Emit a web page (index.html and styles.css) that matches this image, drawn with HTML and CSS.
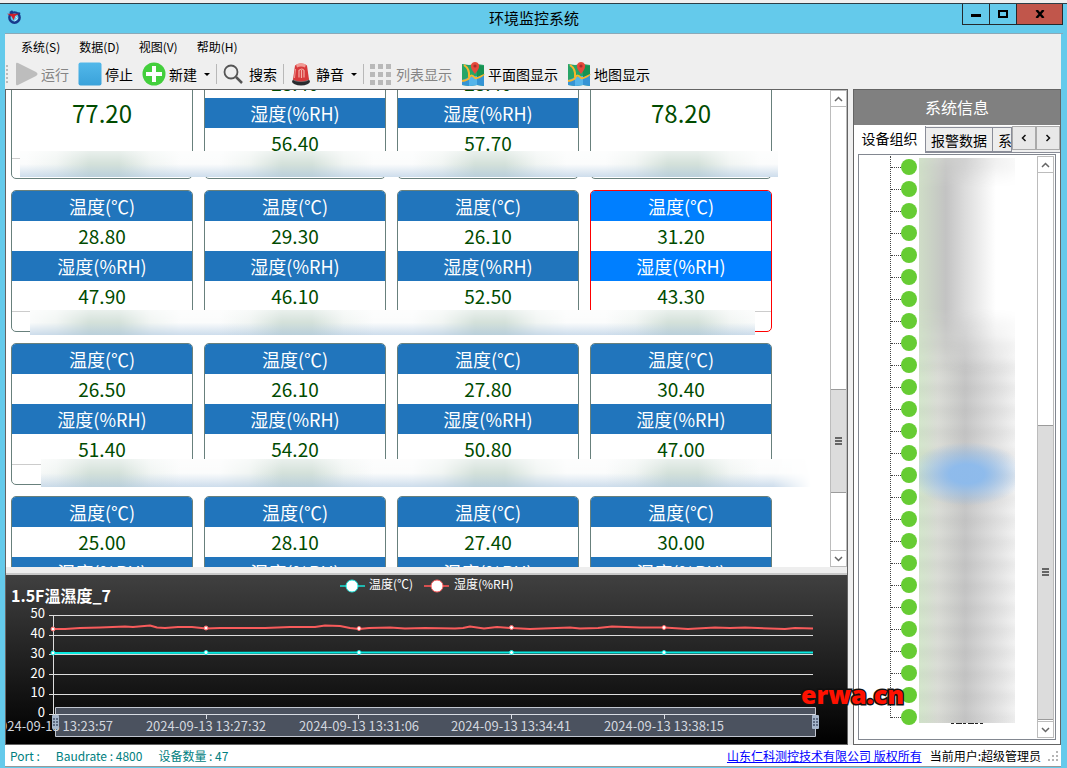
FILE: index.html
```html
<!DOCTYPE html>
<html lang="zh-CN">
<head>
<meta charset="utf-8">
<title>环境监控系统</title>
<link rel="stylesheet" href="styles.css">
</head>
<body>
<div class="window">
  <header class="titlebar">
    <svg class="app-icon" viewBox="0 0 16 16" aria-hidden="true"><circle cx="8" cy="8" r="5.5" fill="none" stroke="#173a8c" stroke-width="2.6"/><path d="M3 3l3-2M12 3l2 1" stroke="#173a8c" stroke-width="2"/><path d="M0 4h13l-4 2-2 5-2-4z" fill="#d11f2a"/><path d="M9 7l2 2-3 3" fill="none" stroke="#e8eefb" stroke-width="1"/></svg>
    <h1 class="window-title">环境监控系统</h1>
    <div class="window-controls">
      <button class="control" aria-label="最小化"><svg viewBox="0 0 10 8" width="10" height="8"><path d="M0 4h10v3H0z"/></svg></button>
      <button class="control" aria-label="最大化"><svg viewBox="0 0 10 8" width="10" height="8"><path d="M1 1h8v6H1z" fill="none" stroke="#000" stroke-width="2"/></svg></button>
      <button class="control control-close" aria-label="关闭"><svg viewBox="0 0 10 8" width="10" height="8"><path d="M1.500 0l7 8M8.500 0l-7 8" stroke="#000" stroke-width="2.4"/></svg></button>
    </div>
  </header>
  <nav class="menu">
    <button>系统(S)</button><button>数据(D)</button><button>视图(V)</button><button>帮助(H)</button>
  </nav>
  <div class="toolbar">
    <span class="grip"></span>
    <button disabled><svg viewBox="0 0 24 24"><path d="M2 2q0-2 2-1l18 9q3 2 0 4L4 23q-2 1-2-1z" fill="#bdbdbd"/></svg>运行</button>
    <button><svg viewBox="0 0 24 24"><defs><linearGradient id="stop" x2="0" y2="1"><stop stop-color="#52b8ea"/><stop offset="1" stop-color="#3aa2da"/></linearGradient></defs><rect x=".5" y=".5" width="23" height="23" rx="2" fill="url(#stop)"/></svg>停止</button>
    <button><svg viewBox="0 0 24 24"><circle cx="12" cy="12" r="11.5" fill="#43cf3c"/><path d="M10 4h4v6h6v4h-6v6h-4v-6H4v-4h6z" fill="#fff"/></svg>新建<i class="caret"></i></button>
    <span class="separator"></span>
    <button><svg viewBox="0 0 24 24"><circle cx="9" cy="10" r="6.500" fill="none" stroke="#555" stroke-width="1.800"/><path d="M14 15l6 6" stroke="#555" stroke-width="2.500"/></svg>搜索</button>
    <span class="separator"></span>
    <button><svg viewBox="0 0 24 24"><ellipse cx="12" cy="19.500" rx="9" ry="4" fill="#292b2e"/><ellipse cx="12" cy="17.500" rx="8" ry="2.500" fill="#777"/><path d="M6 3.500q6-4 12 0l2 14q-8 4-16 0z" fill="#d7393b"/><path d="M7 2.500q5-3 10 0l-1 3q-4-2-8 0z" fill="#f19a94"/><path d="M10 15.500v-7q3-3 5 0v7M12.500 8v8" fill="none" stroke="#f4b0a8" stroke-width="1.200"/><path d="M6.500 7l-1 9" stroke="#f19a94"/></svg>静音<i class="caret"></i></button>
    <span class="separator"></span>
    <button disabled><svg viewBox="0 0 24 24"><path d="M1 2h5v5H1zM9 2h5v5H9zM17 2h5v5h-5zM1 10h5v5H1zM9 10h5v5H9zM17 10h5v5h-5zM1 18h5v5H1zM9 18h5v5H9zM17 18h5v5h-5z" fill="#b9b9b9"/></svg>列表显示</button>
    <button><svg viewBox="0 0 24 24"><g id="map"><path d="M1 2l7 1 8-1 7 1v21l-7-1-8 1-7-1z" fill="#27a567"/><path d="M1 18l7-3 15-2v11l-7-1-8 1-7-1z" fill="#3594d5"/><path d="M8 15l8-1v9l-8 1z" fill="#55b5ea"/><path d="M1 19q6-1 7-3 2-5 6 0 3 1 9-4M3 3q6 4 5 12" fill="none" stroke="#f6b62d" stroke-width="2"/><path d="M16 3l7 1v8l-7 3z" fill="#169252"/><path d="M14 12q-5-6-4-9 1-3 4-3t4 3q1 3-4 9z" fill="#e64a3c"/><circle cx="14" cy="4" r="1.600" fill="#a52f2c"/></g></svg>平面图显示</button>
    <button><svg viewBox="0 0 24 24"><use href="#map"/></svg>地图显示</button>
  </div>

  <main class="workspace">
    <section class="monitor">
      <div class="devices">
        <div class="device-view">
          <div class="device-list">
            <div class="row">
              <dl class="card single"><dt>湿度(%RH)</dt><dd>77.20</dd></dl>
              <dl class="card"><dt>温度(℃)</dt><dd>28.40</dd><dt>湿度(%RH)</dt><dd>56.40</dd></dl>
              <dl class="card"><dt>温度(℃)</dt><dd>28.40</dd><dt>湿度(%RH)</dt><dd>57.70</dd></dl>
              <dl class="card single"><dt>湿度(%RH)</dt><dd>78.20</dd></dl>
              <div class="haze haze-a"></div>
            </div>
            <div class="row">
              <dl class="card"><dt>温度(℃)</dt><dd>28.80</dd><dt>湿度(%RH)</dt><dd>47.90</dd></dl>
              <dl class="card"><dt>温度(℃)</dt><dd>29.30</dd><dt>湿度(%RH)</dt><dd>46.10</dd></dl>
              <dl class="card"><dt>温度(℃)</dt><dd>26.10</dd><dt>湿度(%RH)</dt><dd>52.50</dd></dl>
              <dl class="card selected"><dt>温度(℃)</dt><dd>31.20</dd><dt>湿度(%RH)</dt><dd>43.30</dd></dl>
              <div class="haze haze-b"></div>
            </div>
            <div class="row">
              <dl class="card"><dt>温度(℃)</dt><dd>26.50</dd><dt>湿度(%RH)</dt><dd>51.40</dd></dl>
              <dl class="card"><dt>温度(℃)</dt><dd>26.10</dd><dt>湿度(%RH)</dt><dd>54.20</dd></dl>
              <dl class="card"><dt>温度(℃)</dt><dd>27.80</dd><dt>湿度(%RH)</dt><dd>50.80</dd></dl>
              <dl class="card"><dt>温度(℃)</dt><dd>30.40</dd><dt>湿度(%RH)</dt><dd>47.00</dd></dl>
              <div class="haze haze-c"></div>
            </div>
            <div class="row">
              <dl class="card"><dt>温度(℃)</dt><dd>25.00</dd><dt>湿度(%RH)</dt></dl>
              <dl class="card"><dt>温度(℃)</dt><dd>28.10</dd><dt>湿度(%RH)</dt></dl>
              <dl class="card"><dt>温度(℃)</dt><dd>27.40</dd><dt>湿度(%RH)</dt></dl>
              <dl class="card"><dt>温度(℃)</dt><dd>30.00</dd><dt>湿度(%RH)</dt></dl>
            </div>
          </div>
        </div>
        <div class="scrollbar">
          <button aria-label="向上滚动"><svg viewBox="0 0 9 6" width="9" height="6"><path d="M1 5l3.500-3.500L8 5"/></svg></button>
          <div class="track track-devices"><span class="thumb"></span></div>
          <button aria-label="向下滚动"><svg viewBox="0 0 9 6" width="9" height="6"><path d="M1 1l3.500 3.500L8 1"/></svg></button>
        </div>
      </div>
      <div class="splitter"></div>
      <svg class="chart" viewBox="6 575 841 169" preserveAspectRatio="xMinYMin meet" role="img" aria-label="1.5F溫濕度_7">
        <text class="chart-title" x="11" y="602">1.5F溫濕度_7</text>
        <g class="legend">
          <path d="M340 586h25" stroke="#1fb8b0"/><circle cx="352" cy="586" r="6" fill="#fff" stroke="#22e8de"/><text x="369" y="589">温度(℃)</text>
          <path d="M424 586h25" stroke="#d85050"/><circle cx="437" cy="586" r="6" fill="#fff" stroke="#ff5f5f"/><text x="454" y="589">湿度(%RH)</text>
        </g>
        <path class="grid-lines" d="M49 615.500H813M49 635.500H813M49 654.500H813M49 674.500H813M49 694.500H813M49 714.500H813M53.500 615V714"/>
        <g class="y-labels"><text x="45" y="618">50</text><text x="45" y="638">40</text><text x="45" y="658">30</text><text x="45" y="678">20</text><text x="45" y="697">10</text><text x="45" y="717">0</text></g>
        <path class="line humidity" d="M53 629L65 629 80 628 100 627.500 125 626.500 133 627 150 625.500 157 627.500 165 628 178 627 192 627 206 628.500 220 628 265 628 290 627 315 627 325 625.500 340 626 350 628 359 629 369 628 390 627.500 405 628.500 425 628 455 628.500 463 628 470 626.500 484 628.500 497 627 511 628 530 629 570 627.500 580 628.500 598 628 612 626.500 640 627.500 664 627.500 688 629 715 627.500 730 628 745 627.500 785 629 795 628 813 628.500"/>
        <path class="line temperature" d="M53 653L359 652.500 813 652.500"/>
        <g fill="#fff" stroke="#ff6a6a"><circle cx="53" cy="629" r="2"/><circle cx="206" cy="628" r="2"/><circle cx="359" cy="628.500" r="2"/><circle cx="511.500" cy="627.500" r="2"/><circle cx="664" cy="627.500" r="2"/></g>
        <g fill="#fff" stroke="#10f0e8"><circle cx="53" cy="653" r="2"/><circle cx="206" cy="652.500" r="2"/><circle cx="359" cy="652.500" r="2"/><circle cx="511.500" cy="652.500" r="2"/><circle cx="664" cy="652.500" r="2"/></g>
        <path d="M55.500 707.500H815.500V736.500H55.500z" fill="#4b525f" stroke="#c2c7d1"/>
        <path d="M56 714.500H815M206.500 714v5M358.500 714v5M511.500 714v5M664.500 714v5" stroke="#d9dde4" fill="none"/>
        <g class="x-labels"><text x="53" y="731">2024-09-13 13:23:57</text><text x="206" y="731">2024-09-13 13:27:32</text><text x="359" y="731">2024-09-13 13:31:06</text><text x="511" y="731">2024-09-13 13:34:41</text><text x="664" y="731">2024-09-13 13:38:15</text></g>
        <g><rect x="52" y="715" width="7" height="14" rx="1" fill="#a7b7cc"/><path d="M53 719h2m1 0h2m-5 3h2m1 0h2m-5 3h2m1 0h2" stroke="#45516a" stroke-width="1.500"/><rect x="812" y="715" width="7" height="14" rx="1" fill="#a7b7cc"/><path d="M813 719h2m1 0h2m-5 3h2m1 0h2m-5 3h2m1 0h2" stroke="#45516a" stroke-width="1.500"/></g>
      </svg>
    </section>

    <aside class="info">
      <h2 class="info-title">系统信息</h2>
      <div class="tabs">
        <button class="tab active">设备组织</button>
        <button class="tab">报警数据</button>
        <button class="tab tab-cut">系统</button>
        <button class="tab-arrow" aria-label="上一个"><svg viewBox="0 0 6 8" width="6" height="8"><path d="M4.500 1l-3 3 3 3"/></svg></button>
        <button class="tab-arrow" aria-label="下一个"><svg viewBox="0 0 6 8" width="6" height="8"><path d="M1.500 1l3 3-3 3"/></svg></button>
      </div>
      <div class="tree">
        <div class="tree-view">
          <ul class="nodes">
            <li></li><li></li><li></li><li></li><li></li><li></li><li></li><li></li><li></li><li></li><li></li><li></li><li></li>
            <li></li><li></li><li></li><li></li><li></li><li></li><li></li><li></li><li></li><li></li><li></li><li></li><li></li>
          </ul>
          <div class="names-haze"></div>
        </div>
        <div class="scrollbar">
          <button aria-label="向上滚动"><svg viewBox="0 0 9 6" width="9" height="6"><path d="M1 5l3.500-3.500L8 5"/></svg></button>
          <div class="track track-tree"><span class="thumb"></span></div>
          <button aria-label="向下滚动"><svg viewBox="0 0 9 6" width="9" height="6"><path d="M1 1l3.500 3.500L8 1"/></svg></button>
        </div>
      </div>
    </aside>
    <div class="watermark">erwa.cn</div>
  </main>

  <footer class="status">
    <span class="port">Port :</span>
    <span class="baud">Baudrate : 4800</span>
    <span class="count">设备数量 : 47</span>
    <a href="#">山东仁科测控技术有限公司 版权所有</a>
    <span class="user">当前用户:超级管理员</span>
    <svg class="resize" viewBox="0 0 12 12" width="12" height="12"><path d="M9 1h2v2H9zM5 5h2v2H5zM9 5h2v2H9zM1 9h2v2H1zM5 9h2v2H5zM9 9h2v2H9z" fill="#b5b5b5"/></svg>
  </footer>
</div>
</body>
</html>
```
FILE: styles.css
```css
* { box-sizing: border-box; }

body {
  display: flow-root;
  margin: 0;
  font: 12px/16px "Noto Sans CJK SC", sans-serif;
  color: #000;
  background: #efefef;
}

button {
  margin: 0;
  padding: 0;
  border: 0;
  background: none;
  font: inherit;
  color: inherit;
}

.window {
  display: flex;
  flex-direction: column;
  height: calc(100vh - 3px);
  margin-top: 3px;
  padding: 0 6px 1px 5px;
  border-top: 1px solid #2c3e46;
  background: #64caeb;
}

/* Title bar */
.titlebar {
  display: grid;
  grid-template-columns: 101px 1fr 101px;
  flex: none;
  height: 30px;
  margin-right: -2px;
  border-bottom: 1px solid #8ba9b8;
}

.app-icon { width: 15px; height: 15px; margin: 6px 2px; }

.window-title {
  margin: 0;
  font-size: 15px;
  line-height: 28px;
  font-weight: 400;
  text-align: center;
}

.window-controls {
  display: flex;
  height: 21px;
  border: 1px solid #24292c;
  border-top: 0;
}

.control {
  display: grid;
  place-items: center;
  flex: 27;
  border-right: 1px solid #24292c;
}

.control-close { flex: 46; border: 0; background: #c1564b; }

/* Menu and toolbar */
.menu {
  display: flex;
  flex: none;
  gap: 19px;
  height: 25px;
  padding-left: 16px;
  background: #efefef;
}

.toolbar {
  display: flex;
  flex: none;
  align-items: center;
  height: 30px;
  background: #efefef;
  font-size: 14px;
}

.toolbar button {
  display: flex;
  align-items: center;
  gap: 3px;
  height: 24px;
  padding: 0 4px 0 5px;
  line-height: 20px;
  white-space: nowrap;
}

.toolbar button:disabled { color: #858585; }
.toolbar button svg { width: 24px; height: 24px; }

.grip {
  width: 2px;
  height: 18px;
  margin: 0 1px;
  background: repeating-linear-gradient(#bbb 0 2px, transparent 2px 4px);
}

.separator { width: 1px; height: 20px; margin-left: 2px; background: #b8b8b8; }

.caret {
  margin-left: 4px;
  border: 3px solid transparent;
  border-top-color: #000;
  border-bottom: 0;
}

/* Main area */
.workspace {
  position: relative;
  display: flex;
  flex: 1;
  gap: 5px;
  min-height: 0;
  background: #f0f0f0;
}

.monitor {
  display: flex;
  flex: 1;
  flex-direction: column;
  min-width: 0;
  border: 1px solid #646464;
}

.devices { display: flex; flex: 1; min-height: 0; background: #fff; }
.device-view { flex: 1; min-width: 0; padding-left: 5px; overflow: hidden; }
.device-list { display: grid; gap: 11px; margin-top: -53px; }

.row {
  position: relative;
  display: grid;
  grid-template-columns: repeat(4, 182px);
  gap: 11px;
}

.card {
  display: flex;
  flex-direction: column;
  height: 142px;
  margin: 0;
  overflow: hidden;
  border: 1px solid #68807c;
  border-radius: 5px;
  background: #fff;
  line-height: 30px;
  text-align: center;
}

.card::after { content: ""; border-top: 1px solid #ccc; }
.card dt { background: #2175bc; color: #fff; font-size: 18px; }
.card dd { height: 30px; margin: 0; color: #004b00; font-size: 19px; }
.card.single dd { height: 90px; font-size: 24px; line-height: 90px; }
.card.selected { border-color: #f00; }
.card.selected dt { background: #007fff; }

.haze {
  position: absolute;
  background:
    linear-gradient(rgba(255, 255, 255, 0.5), rgba(255, 255, 255, 0) 50%, rgba(160, 190, 220, 0.5)),
    linear-gradient(90deg, #fbfcfc 0 15px, #f1f5f3 45px, #d4e1da 78px 108px, #f1f5f3 140px, #fbfcfc 170px 193px);
  background-size: 100% 100%, 193px 100%;
}

.haze-a { left: 9px; top: 114px; width: 758px; height: 26px; background-position: 0 0, -9px 0; }
.haze-b { left: 19px; top: 120px; width: 725px; height: 25px; background-position: 0 0, -19px 0; }
.haze-c {
  left: 30px;
  top: 116px;
  width: 770px;
  height: 28px;
  background-position: 0 0, -30px 0;
  -webkit-mask-image: linear-gradient(90deg, #000 732px, transparent 770px);
  mask-image: linear-gradient(90deg, #000 732px, transparent 770px);
}

/* Scroll bars */
.scrollbar {
  display: flex;
  flex: none;
  flex-direction: column;
  width: 17px;
  border: solid #bcbcbc;
  border-width: 0 1px;
  background: #fff;
}

.scrollbar button {
  display: grid;
  place-items: center;
  height: 17px;
  border: solid #bcbcbc;
  border-width: 1px 0;
}

.scrollbar path { fill: none; stroke: #666; stroke-width: 1.5; }
.track { display: grid; flex: 1; }
.track-devices { grid-template-rows: 282fr 104fr 57fr; }
.track-tree { grid-template-rows: 252fr 296fr 1fr; }

.thumb {
  grid-row: 2;
  display: grid;
  place-items: center;
  border: solid #9b9b9b;
  border-width: 1px 0;
  background: #dcdcdc;
}

.thumb::before {
  content: "";
  width: 7px;
  height: 8px;
  background: repeating-linear-gradient(#666 0 2px, transparent 2px 3px);
}

.splitter { flex: none; height: 8px; border-bottom: 2px solid #c9c9c9; background: #eee; }

/* Chart */
.chart {
  display: block;
  flex: none;
  width: 100%;
  background: linear-gradient(#404040, #000);
}

.chart text { fill: #fff; font-size: 13px; }
.chart .chart-title { font-size: 16px; font-weight: 700; }
.chart .legend text { font-size: 12px; }
.legend path { stroke-width: 2; }
.grid-lines { fill: none; stroke: #ddd; }
.y-labels { text-anchor: end; }
.x-labels { text-anchor: middle; }
.chart .x-labels text { fill: #d3d7df; }
.line { fill: none; stroke-width: 2; stroke-linejoin: round; }
.humidity { stroke: #f85b5b; }
.temperature { stroke: #08e8df; }

/* System information */
.info {
  display: flex;
  flex: none;
  flex-direction: column;
  width: 208px;
  border: 1px solid #646464;
  background: #fff;
}

.info-title {
  flex: none;
  margin: 0;
  background: #808080;
  color: #fff;
  font-size: 16px;
  font-weight: 400;
  line-height: 35px;
  text-align: center;
}

.tabs {
  display: flex;
  flex: none;
  height: 28px;
  border-top: 1px solid #fff;
  border-bottom: 1px solid #8a8d98;
  background: #f0f0f0;
  font-size: 14px;
  line-height: 20px;
}

.tab {
  flex: none;
  width: 67px;
  height: 25px;
  margin-top: 1px;
  border: 1px solid #8a8d98;
  border-left: 0;
  background: #eee;
  white-space: nowrap;
}

.tab.active { width: 72px; height: 27px; margin: 0; padding-bottom: 4px; border-top: 0; border-bottom: 0; background: #fff; }
.tab-cut { flex: 1; width: auto; min-width: 0; padding-left: 5px; overflow: hidden; text-align: left; }
.tab-arrow { display: grid; place-items: center; flex: none; width: 24px; height: 24px; border: 1px solid #aaa; background: #e8e8e8; }
.tab-arrow path { fill: none; stroke: #111; stroke-width: 1.5; }

.tree {
  display: flex;
  flex: 1;
  min-height: 0;
  margin: 1px 4px 4px;
  padding: 1px;
  border: 1px solid #828790;
}

.tree-view { position: relative; flex: 1; min-width: 0; overflow: hidden; }

.nodes {
  margin: 0 0 0 30px;
  padding: 0;
  border-left: 1px dotted #444;
  list-style: none;
}

.nodes li { display: flex; align-items: center; height: 22px; }
.nodes li:last-child { margin-bottom: -10px; }
.nodes li::before { content: ""; width: 10px; border-top: 1px dotted #444; }
.nodes li::after { content: ""; width: 16px; height: 16px; border-radius: 50%; background: #66cc33; }
.nodes { height: 562px; }

.names-haze {
  position: absolute;
  left: 59px;
  top: 2px;
  width: 96px;
  height: 565px;
  background:
    radial-gradient(ellipse 58px 32px at 48px 316px, rgba(139, 186, 237, 0.95) 30%, rgba(139, 186, 237, 0) 100%),
    repeating-linear-gradient(rgba(120, 120, 120, 0) 0 2px, rgba(120, 120, 120, 0.05) 9px 12px, rgba(120, 120, 120, 0) 22px),
    linear-gradient(90deg, #d3e6cb, #dadcd6 20%, #c6c6c6 48%, #dadada 72%, #f2f2f2);
}

.names-haze::before {
  content: "";
  display: block;
  height: 215px;
  background: linear-gradient(90deg, #cfddc7, #c3c3c3 28%, #dcdcdc 48%, #fff 80%);
  -webkit-mask-image: linear-gradient(rgba(0, 0, 0, 0.5), #000 30px 150px, transparent);
  mask-image: linear-gradient(rgba(0, 0, 0, 0.5), #000 30px 150px, transparent);
}

.names-haze::after {
  content: "";
  position: absolute;
  left: 32px;
  top: 100%;
  width: 32px;
  height: 1px;
  background: repeating-linear-gradient(90deg, #222 0 3px, transparent 3px 5px, #222 5px 11px, transparent 11px 12px);
}

.watermark {
  position: absolute;
  right: 157px;
  bottom: 37px;
  color: #f10;
  font: 800 25px/28px "Open Sans", sans-serif;
  -webkit-text-stroke: 3px #111;
  paint-order: stroke fill;
}

/* Status bar */
.status {
  display: flex;
  flex: none;
  align-items: center;
  height: 22px;
  padding: 0 2px 0 5px;
  border-bottom: 1px solid #999;
  background: #fff;
  white-space: nowrap;
}

.port, .baud, .count { color: #008080; }
.baud, .count { margin-left: 16px; }
.status a { margin-left: auto; color: #00f; }
.user { margin: 0 6px 0 8px; }
```
